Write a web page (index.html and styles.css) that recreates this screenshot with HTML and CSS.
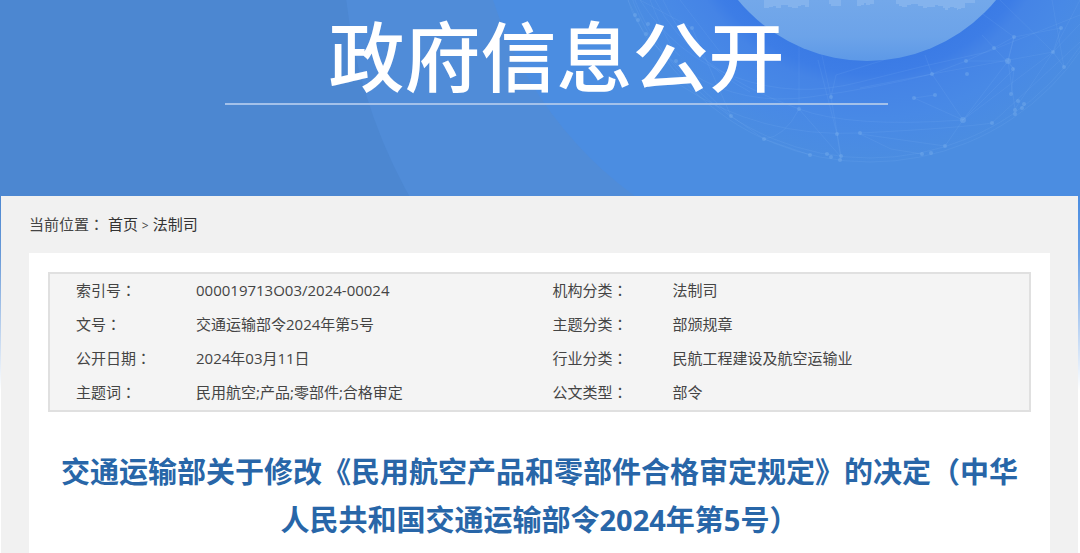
FILE: index.html
```
<!DOCTYPE html>
<html lang="zh-CN">
<head>
    <meta charset="UTF-8">
    <meta name="viewport" content="width=device-width, initial-scale=1.0">
    <title>政府信息公开</title>
    <link rel="stylesheet" href="styles.css">
</head>
<body>

    <svg class="page-bg" viewBox="0 0 1080 390" preserveAspectRatio="none" aria-hidden="true">
        <defs>
            <linearGradient id="disc" x1="0" y1="0" x2="0" y2="61" gradientUnits="userSpaceOnUse">
                <stop offset="0" stop-color="#73a8ea"/>
                <stop offset="0.6" stop-color="#6ca3e9"/>
                <stop offset="1" stop-color="#5d99e7"/>
            </linearGradient>
            <radialGradient id="halo" cx="867" cy="-106" r="268" gradientUnits="userSpaceOnUse">
                <stop offset="0.62" stop-color="#3b7be5"/>
                <stop offset="0.67" stop-color="#3d7de6"/>
                <stop offset="0.72" stop-color="#4584e6"/>
                <stop offset="0.84" stop-color="#4889e6"/>
                <stop offset="1" stop-color="#4b8de1"/>
            </radialGradient>
            <linearGradient id="fade" x1="0" y1="0" x2="0" y2="1">
                <stop offset="0" stop-color="#fff" stop-opacity="0"/>
                <stop offset="0.3" stop-color="#fff" stop-opacity="0.15"/>
                <stop offset="1" stop-color="#fff"/>
            </linearGradient>
            <clipPath id="frame"><rect width="1080" height="390"/></clipPath>
        </defs>
        <g clip-path="url(#frame)">
            <rect width="1080" height="390" fill="#4c87d1"/>
            <circle cx="867" cy="-59" r="524" fill="#508cd8"/>
            <circle cx="867" cy="-121" r="393" fill="#4b8de1"/>
            <rect x="960" y="190" width="120" height="200" fill="#4b8de1"/>
            <circle cx="870" cy="-93" r="255" fill="url(#halo)"/>

            <!-- globe mesh -->
            <g fill="none" stroke="#8ebcf3" stroke-opacity="0.12">
                <circle cx="870" cy="-93" r="255"/>
                <circle cx="870" cy="-96" r="254"/>
                <path d="M628 0Q640 42 692 74T810 97T932 74L1053 52L1080 24M640 0Q675 55 735 77T860 82T987 52L1080 15"/>
                <path d="M655 0Q690 70 799 109Q850 128 963 120M680 85Q760 138 860 133T992 123L1080 42"/>
                <path d="M799 0V109L840 156M810 0L831 97L841 156M818 60L837 134L841 160M799 109Q785 137 764 139M884 60L836 75L831 97"/>
                <path d="M925 55L932 74L963 120L1014 69L1008 61L963 120L1053 52M980 12L1014 37L1008 61L1015 109M966 61L994 48L1014 37L1061 28"/>
                <path d="M1014 37L1008 61L966 61L932 74L860 88M1061 28L1053 52L1015 109M963 120L914 98L935 95M963 120L945 146L860 134M860 134L891 149L922 154M1080 0L1053 52L1064 67M982 35L1014 69L1011 94"/>
                <path d="M640 0L692 28L731 116L764 139L810 155M628 0L645 36L731 116M650 0Q670 50 680 56M663 0Q690 60 750 92M680 0L720 52M1052 0L1064 67M1000 0L1053 52"/>
            </g>
            <g fill="#7db1ee" fill-opacity="0.4">
                <circle cx="692" cy="28" r="2"/><circle cx="635" cy="15" r="2"/><circle cx="638" cy="20" r="2"/>
                <circle cx="648" cy="24" r="2"/><circle cx="646" cy="34" r="2"/><circle cx="676" cy="61" r="2"/>
                <circle cx="731" cy="116" r="2"/><circle cx="764" cy="139" r="2"/><circle cx="799" cy="109" r="2"/>
                <circle cx="831" cy="97" r="2"/><circle cx="837" cy="134" r="2"/><circle cx="860" cy="133" r="2"/>
                <circle cx="810" cy="155" r="2"/><circle cx="827" cy="154" r="2"/><circle cx="831" cy="157" r="2"/>
                <circle cx="841" cy="156" r="2"/><circle cx="840" cy="160" r="2"/><circle cx="922" cy="154" r="2"/>
                <circle cx="931" cy="153" r="2"/><circle cx="945" cy="146" r="2"/><circle cx="914" cy="98" r="2"/>
                <circle cx="935" cy="95" r="2"/><circle cx="932" cy="74" r="2"/><circle cx="967" cy="74" r="2"/>
                <circle cx="966" cy="61" r="2"/><circle cx="994" cy="48" r="2"/><circle cx="1014" cy="37" r="2"/>
                <circle cx="1008" cy="61" r="3"/><circle cx="1013" cy="69" r="2"/><circle cx="1061" cy="28" r="2"/>
                <circle cx="1053" cy="52" r="2"/><circle cx="1064" cy="67" r="2"/><circle cx="1011" cy="94" r="2"/>
                <circle cx="1018" cy="101" r="2"/><circle cx="1024" cy="104" r="2"/><circle cx="1022" cy="108" r="2"/>
                <circle cx="1015" cy="110" r="2"/><circle cx="1015" cy="114" r="2"/><circle cx="992" cy="123" r="2"/>
                <circle cx="963" cy="120" r="3"/>
            </g>

            <circle cx="867" cy="-106" r="167" fill="url(#disc)"/>
            <path fill="#84b3ed" d="M764 0V8H769V7H773V6H776V8H781V5H788V7H792V8H798V6H801V5H805V7H809V0ZM829 0V4H831V6H841V0ZM857 0V6H861V5H864V3H866V5H870V4H874V0ZM896 0V4H899V6H902V7H907V5H911V4H918V6H923V8H927V7H935V5H938V6H943V8H945V10H948V8H950V7H954V8H957V10H958V9H961V8H965V3H975V0ZM945 0V1H950V0Z"/>
            <rect y="196" width="1080" height="194" fill="url(#fade)"/>
        </g>
    </svg>

    <header class="banner">
        <h1 class="banner-title">政府信息公开</h1>
    </header>

    <main class="container">
        <nav class="position">
            当前位置<span class="mark" lang="zh-TW">：</span>
            <a href="#">首页</a> <span class="sep">&gt;</span> <a href="#">法制司</a>
        </nav>

        <article class="content">
            <table class="info">
                <tr>
                    <th scope="row">索引号<span class="mark" lang="zh-TW">：</span></th>
                    <td>000019713O03/2024-00024</td>
                    <th scope="row">机构分类<span class="mark" lang="zh-TW">：</span></th>
                    <td>法制司</td>
                </tr>
                <tr>
                    <th scope="row">文号<span class="mark" lang="zh-TW">：</span></th>
                    <td>交通运输部令2024年第5号</td>
                    <th scope="row">主题分类<span class="mark" lang="zh-TW">：</span></th>
                    <td>部颁规章</td>
                </tr>
                <tr>
                    <th scope="row">公开日期<span class="mark" lang="zh-TW">：</span></th>
                    <td>2024年03月11日</td>
                    <th scope="row">行业分类<span class="mark" lang="zh-TW">：</span></th>
                    <td>民航工程建设及航空运输业</td>
                </tr>
                <tr>
                    <th scope="row">主题词<span class="mark" lang="zh-TW">：</span></th>
                    <td>民用航空;产品;零部件;合格审定</td>
                    <th scope="row">公文类型<span class="mark" lang="zh-TW">：</span></th>
                    <td>部令</td>
                </tr>
            </table>

            <h2 class="title">交通运输部关于修改《民用航空产品和零部件合格审定规定》的决定（中华人民共和国交通运输部令2024年第5号）</h2>
        </article>
    </main>

</body>
</html>
```
FILE: styles.css
```
* {
    box-sizing: border-box;
}

body {
    margin: 0;
    min-height: 100vh;
    display: flex;
    flex-direction: column;
    position: relative;
    background-color: #fff;
    color: #444;
    font-family: "Open Sans", "Noto Sans CJK SC", sans-serif;
    font-size: 15px;
}

/* banner picture, runs on behind the grey page */
.page-bg {
    position: absolute;
    top: 0;
    left: 0;
    width: 100%;
    height: 390px;
    z-index: -1;
}

.banner {
    height: 196px;
    padding-left: 33px;
}

.banner-title {
    width: 663px;
    max-width: 100%;
    height: 105px;
    margin: 0 auto;
    padding-top: 5px;
    border-bottom: 2px solid #a3c1ea;
    color: #fff;
    font-size: 76px;
    font-weight: 500;
    line-height: 104px;
    text-align: center;
}

.container {
    flex: 1;
    margin: 0 2px 0 1px;
    padding: 0 28px;
    display: flex;
    flex-direction: column;
    background-color: #f1f1f1;
}

.position {
    padding: 13px 0 14px;
    line-height: 30px;
}

.position a {
    color: #333;
    text-decoration: none;
}

.position a:hover {
    color: #2866a8;
}

.sep {
    font-size: 12px;
    line-height: 1;
}

/* colon set in the middle of its square */
.mark {
    font-family: "Noto Sans CJK TC", sans-serif;
    line-height: 1;
}

.content {
    flex: 1;
    padding: 19px 19px 0;
    background-color: #fff;
}

.info {
    width: 100%;
    padding-left: 26px;
    table-layout: fixed;
    border: 2px solid #e0e0e0;
    border-spacing: 0;
    background-color: #f4f4f4;
}

.info th,
.info td {
    height: 34px;
    padding: 0 0 2px;
    line-height: 30px;
    text-align: left;
    font-weight: normal;
}

.info th {
    width: 120px;
}

.title {
    margin: 36px 0 0;
    color: #2866a8;
    font-size: 29px;
    font-weight: bold;
    line-height: 48px;
    text-align: center;
}
```
